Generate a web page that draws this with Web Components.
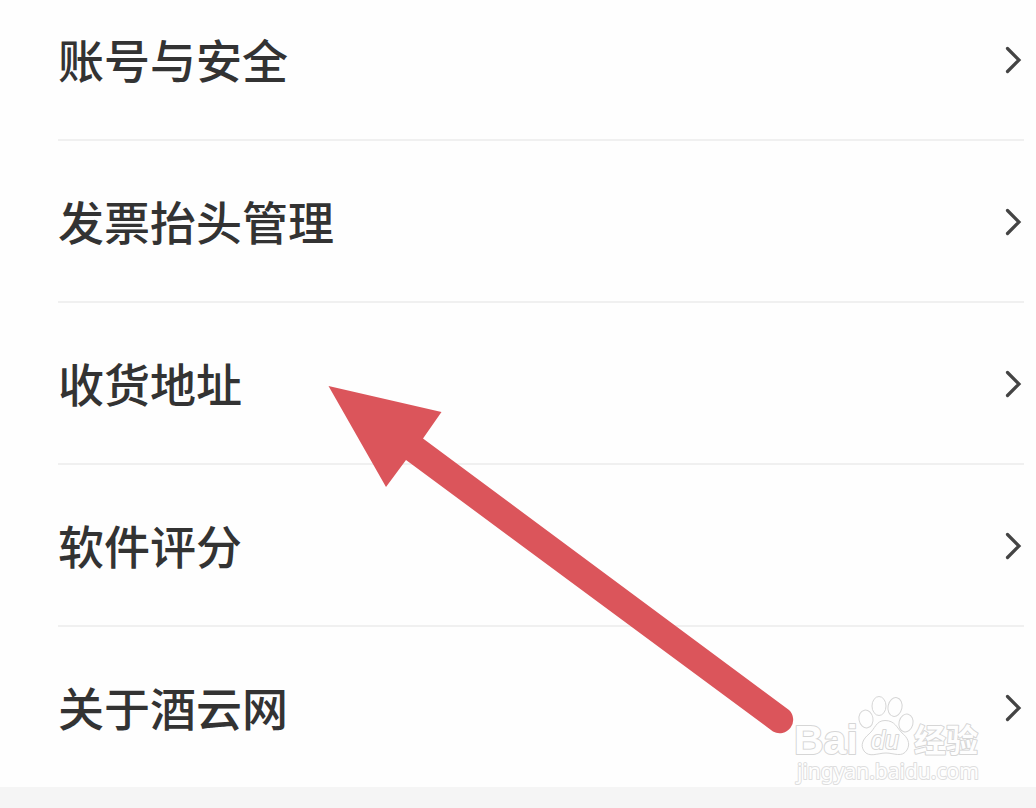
<!DOCTYPE html>
<html lang="zh-CN">
<head>
<meta charset="utf-8">
<meta name="viewport" content="width=device-width, initial-scale=1">
<title>设置</title>
<style>
html{background:#f5f5f5}
body{margin:0;font-family:"Noto Sans CJK SC","Liberation Sans",sans-serif;color:#333}
</style>
</head>
<body>
<settings-page>
  <settings-item first>账号与安全</settings-item>
  <settings-item>发票抬头管理</settings-item>
  <settings-item>收货地址</settings-item>
  <settings-item>软件评分</settings-item>
  <settings-item last>关于酒云网</settings-item>
  <pointer-arrow slot="overlay"></pointer-arrow>
  <site-watermark slot="overlay"></site-watermark>
</settings-page>
<script>
const define = (name, html) => customElements.define(name, class extends HTMLElement {
  constructor() {
    super();
    const t = document.createElement('template');
    t.innerHTML = html;
    this.attachShadow({mode: 'open'}).append(t.content.cloneNode(true));
  }
});

define('settings-page', `
<style>
:host{display:block;position:relative;overflow:hidden}
nav{display:flex;flex-direction:column;background:#fefefe;padding:0 12px 0 58px}
</style>
<nav aria-label="设置"><slot></slot></nav>
<slot name="overlay"></slot>`);

define('settings-item', `
<style>
:host{display:block;border-bottom:2px solid #f0f0f0}
:host([last]){border-bottom:0}
a{display:flex;align-items:center;justify-content:space-between;padding:46px 0 48px;color:inherit;text-decoration:none;font-size:46px;line-height:66px;font-weight:500}
:host([first]) a{padding-top:25px}
svg{flex:none;display:block;width:20px;height:30px;margin-top:4px}
</style>
<a href="#"><span><slot></slot></span>
<svg viewBox="0 0 20 30" fill="none" stroke="#444" stroke-width="3.200" stroke-linecap="round" stroke-linejoin="miter" aria-hidden="true"><path d="M3.500 3.500 15 15 3.500 26.500"/></svg></a>`);

define('pointer-arrow', `
<style>
:host{display:block;position:absolute;left:328px;top:385px;width:468px;height:352px;pointer-events:none}
svg{display:block}
</style>
<svg width="468" height="352" viewBox="328 385 468 352" aria-hidden="true">
<path fill="#db555b" d="M328.500 386 441.500 412 423 438.500 789 710A13.500 13.500 0 0 1 773 731.500L406 460 386 487Z"/></svg>`);

define('site-watermark', `
<style>
:host{display:block;position:absolute;left:790px;top:690px;width:200px;height:100px;pointer-events:none}
svg{display:block}
text{font-family:"Liberation Sans","Noto Sans CJK SC",sans-serif;paint-order:stroke}
</style>
<svg width="200" height="100" viewBox="790 690 200 100" fill="#fefefe" stroke="#d6d6d6" stroke-width="2" stroke-linejoin="round" aria-label="Baidu 经验">
<text x="794" y="754" font-size="41" font-weight="700">Bai</text>
<g stroke-width="1">
<ellipse cx="866" cy="719" rx="7" ry="9" transform="rotate(-10 866 719)"/>
<ellipse cx="879" cy="706" rx="7" ry="9.500"/>
<ellipse cx="895" cy="707" rx="7" ry="9.500" transform="rotate(12 895 707)"/>
<ellipse cx="906" cy="723" rx="7" ry="9" transform="rotate(14 906 723)"/>
<path d="M885 720.500C876 720.500 875 729 869 734C863 739 860 745 864 751C869 758 878 753 886 753C894 753 902 758 907 750C911 743 907 737 902 733C897 728 895 720.500 885 720.500Z"/>
</g>
<text x="871" y="749" font-size="25" font-style="italic">du</text>
<text x="914" y="752" font-size="32" font-weight="700" style="font-family:'Noto Sans CJK SC',sans-serif">经验</text>
<text x="797" y="779" font-size="21" stroke="#dedede" style="font-family:'Noto Sans',sans-serif">jingyan.baidu.com</text>
</svg>`);
</script>
</body>
</html>
